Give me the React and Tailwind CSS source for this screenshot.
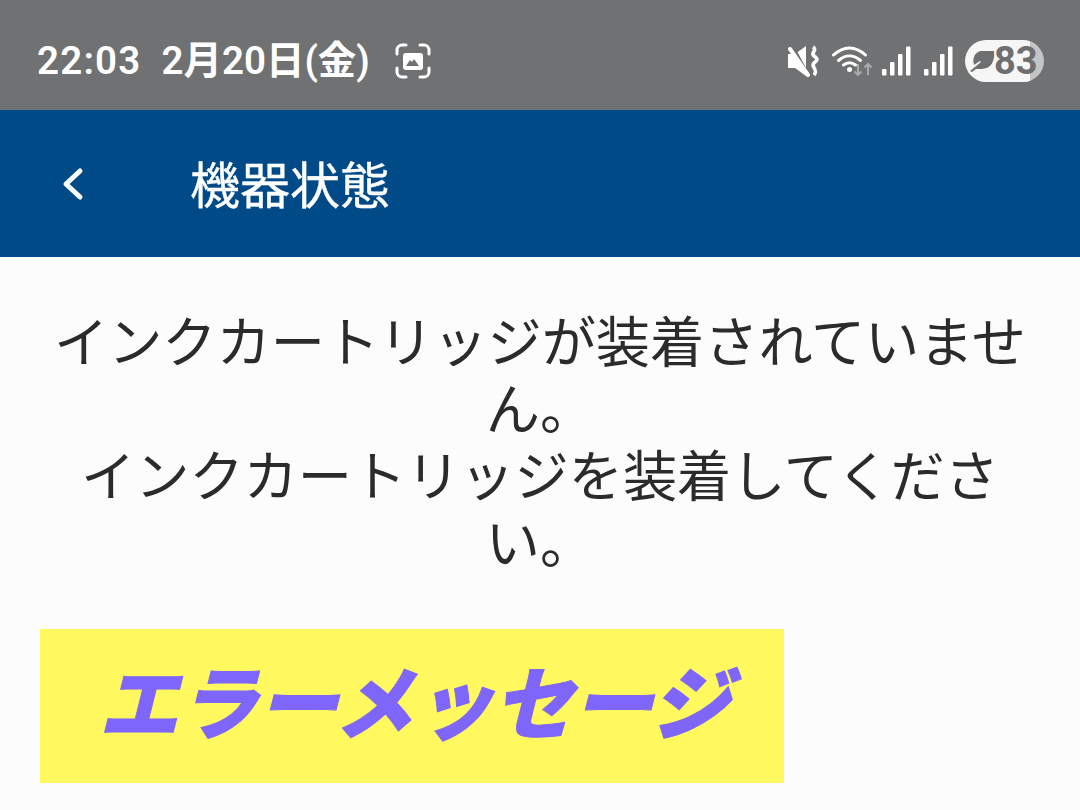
import React from "react";

const jp = "font-['Roboto','Noto_Sans_CJK_JP',sans-serif]";

function MuteIcon() {
  return (
    <svg width="32" height="32" viewBox="0 0 32 32">
      <path d="M0 9h7l11-8v30l-11-8H0z" fill="#fff" />
      <path d="M4 0l15 28" stroke="#707172" strokeWidth="3" />
      <path d="M2 4l18 26" stroke="#fff" strokeWidth="4" strokeLinecap="round" />
      <path d="M25 2c5 3-3 6 1 9 4 3 4 4 0 7-4 4 5 6 0 12" stroke="#fff" strokeWidth="3.600" fill="none" />
    </svg>
  );
}

function WifiIcon() {
  return (
    <svg width="40" height="32" viewBox="0 0 40 32">
      <path d="M1.500 10c10-9.500 22-9.500 32 0" stroke="#fff" strokeWidth="3" fill="none" strokeLinecap="round" />
      <path d="M6.500 15.500c7-6 15-6 22 0" stroke="#fff" strokeWidth="3" fill="none" strokeLinecap="round" />
      <path d="M11.500 20c4-3 8-3 12 0" stroke="#fff" strokeWidth="3" fill="none" strokeLinecap="round" />
      <circle cx="17.500" cy="24.500" r="2.500" fill="#fff" />
      <path d="M26 19v11m-3.500-3.500l3.500 3.500 3.500-3.500" stroke="#a9aaab" strokeWidth="2" fill="none" />
      <path d="M36 30V19m-3.500 3.500L36 19l3.500 3.500" stroke="#a9aaab" strokeWidth="2" fill="none" />
    </svg>
  );
}

function SignalIcon() {
  return (
    <svg width="30" height="30" viewBox="0 0 30 30" fill="#fff">
      <rect x="0" y="23" width="4.500" height="6.500" rx="1" />
      <rect x="8" y="16" width="4.500" height="13.500" rx="1" />
      <rect x="16" y="8" width="4.500" height="21.500" rx="1" />
      <rect x="24" y="0.500" width="4.500" height="29" rx="1" />
    </svg>
  );
}

function ScreenshotIcon() {
  return (
    <svg width="36" height="36" viewBox="0 0 36 36" fill="none">
      <path d="M2 11V7a5 5 0 0 1 5-5h4M25 2h4a5 5 0 0 1 5 5v4M34 25v4a5 5 0 0 1-5 5h-4M11 34H7a5 5 0 0 1-5-5v-4" stroke="#fff" strokeWidth="3" strokeLinecap="round" />
      <rect x="8" y="10" width="20" height="17" rx="3" fill="#fff" />
      <path d="M11 23l4-6 2 2 2-3 5 7z" fill="#707172" />
    </svg>
  );
}

function BatteryPill() {
  return (
    <div className="relative flex h-[42px] w-[79px] items-center overflow-hidden rounded-full bg-[#c4c4c4]">
      <div className="absolute inset-y-0 left-0 w-[65px] rounded-l-full bg-[#f6f6f6]" />
      <svg className="relative ml-[4px]" width="26" height="26" viewBox="0 0 26 26">
        <path d="M12 3h13c1 9-2 18-13 18H7l-4 3-2-1 11-9-1-1-6 4C3 10 6 4 12 3z" fill="#6e6f70" />
      </svg>
      <span className="relative ml-[-1px] font-['Roboto',sans-serif] text-[38px] leading-none font-bold text-[#6e6f70]">83</span>
    </div>
  );
}

export default function App() {
  return (
    <div className={`flex h-[810px] w-[1080px] flex-col overflow-hidden bg-[#fcfcfc] ${jp}`}>
      <div className="flex h-[110px] items-center justify-between bg-[#707172] pt-[11px] pr-[36px] pl-[37px]">
        <div className="flex items-center text-[38.5px] font-semibold text-white">
          <span className="tracking-[1.2px]">22:03</span>
          <span className="ml-[20px]">2月20日(金)</span>
          <div className="ml-[25px]">
            <ScreenshotIcon />
          </div>
        </div>
        <div className="flex items-center">
          <MuteIcon />
          <div className="ml-[12px]">
            <WifiIcon />
          </div>
          <div className="ml-[10px]">
            <SignalIcon />
          </div>
          <div className="ml-[12px]">
            <SignalIcon />
          </div>
          <div className="ml-[11px]">
            <BatteryPill />
          </div>
        </div>
      </div>

      <div className="flex h-[147px] items-center bg-[#004a88] pl-[61px]">
        <svg width="24" height="36" viewBox="0 0 24 36" fill="none">
          <path d="M19 5L5 18l14 13" stroke="#fff" strokeWidth="5" strokeLinecap="round" strokeLinejoin="round" />
        </svg>
        <h1 className="mt-[6px] ml-[105px] text-[50px] leading-none font-normal text-white [-webkit-text-stroke:0.4px_#fff]">機器状態</h1>
      </div>

      <p className="mt-[53px] px-[40px] text-center text-[54.2px] leading-[67px] text-[#2b2b2b]">
        インクカートリッジが装着されていません。
        <br />
        インクカートリッジを装着してください。
      </p>

      <div className="mt-[51px] ml-[40px] flex h-[154px] w-[744px] items-center justify-center bg-[#fff95f]">
        <span className="ml-[5px] text-[79.5px] leading-none font-black text-[#7f66fb] italic [-webkit-text-stroke:1px_#7f66fb]">エラーメッセージ</span>
      </div>
    </div>
  );
}
